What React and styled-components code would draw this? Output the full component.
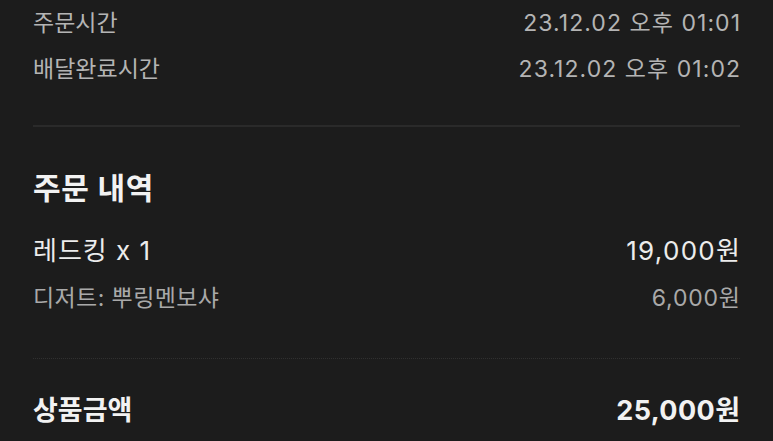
import React from 'react';
import styled, { createGlobalStyle } from 'styled-components';

const GlobalStyle = createGlobalStyle`
  html, body {
    margin: 0;
    padding: 0;
    background: #1c1c1c;
  }
  body {
    font-family: Inter, "Noto Sans CJK KR", "Noto Sans", sans-serif;
    -webkit-font-smoothing: antialiased;
  }
`;

const Page = styled.div`
  width: 773px;
  height: 441px;
  overflow: hidden;
  box-sizing: border-box;
  padding: 0 33px;
  background: #1c1c1c;
`;

const Row = styled.div`
  display: flex;
  justify-content: space-between;
  align-items: center;
  height: ${p => p.h || 36}px;
  margin-top: ${p => p.mt || 0}px;
  color: ${p => p.color || '#b4b4b4'};
  font-size: ${p => p.size || 23}px;
  font-weight: ${p => p.weight || 400};
  line-height: 1;
  white-space: nowrap;
`;

const Label = styled.span`
  letter-spacing: ${p => p.track || 0}px;
`;

const Value = styled.span`
  letter-spacing: ${p => p.track || 0}px;
  margin-right: ${p => -(p.track || 0)}px;
`;

const Divider = styled.div`
  margin-top: ${p => p.mt}px;
  height: 0;
  border-top: ${p => (p.dotted ? '1px dotted #303030' : '2px solid #2a2a2a')};
`;

const Heading = styled.h2`
  margin: 43px 0 0;
  height: 36px;
  display: flex;
  align-items: center;
  font-size: 30px;
  font-weight: 600;
  letter-spacing: 0.6px;
  color: #f2f2f2;
  line-height: 1;
`;

export default function App() {
  return (
    <Page>
      <GlobalStyle />
      <Row h={46}>
        <Label>주문시간</Label>
        <Value track={1.05}>23.12.02 오후 01:01</Value>
      </Row>
      <Row h={46}>
        <Label>배달완료시간</Label>
        <Value track={1.05}>23.12.02 오후 01:02</Value>
      </Row>
      <Divider mt={33} />
      <Heading>주문 내역</Heading>
      <Row mt={27} size={26} color="#ececec">
        <Label track={1}>레드킹 x 1</Label>
        <Value track={1.3}>19,000원</Value>
      </Row>
      <Row mt={11} size={23} color="#a9a9a9">
        <Label track={0.4}>디저트: 뿌링멘보샤</Label>
        <Value track={0.8}>6,000원</Value>
      </Row>
      <Divider dotted mt={42} />
      <Row mt={33} size={27} weight={700} color="#f2f2f2">
        <Label>상품금액</Label>
        <Value track={0.4}>25,000원</Value>
      </Row>
    </Page>
  );
}
